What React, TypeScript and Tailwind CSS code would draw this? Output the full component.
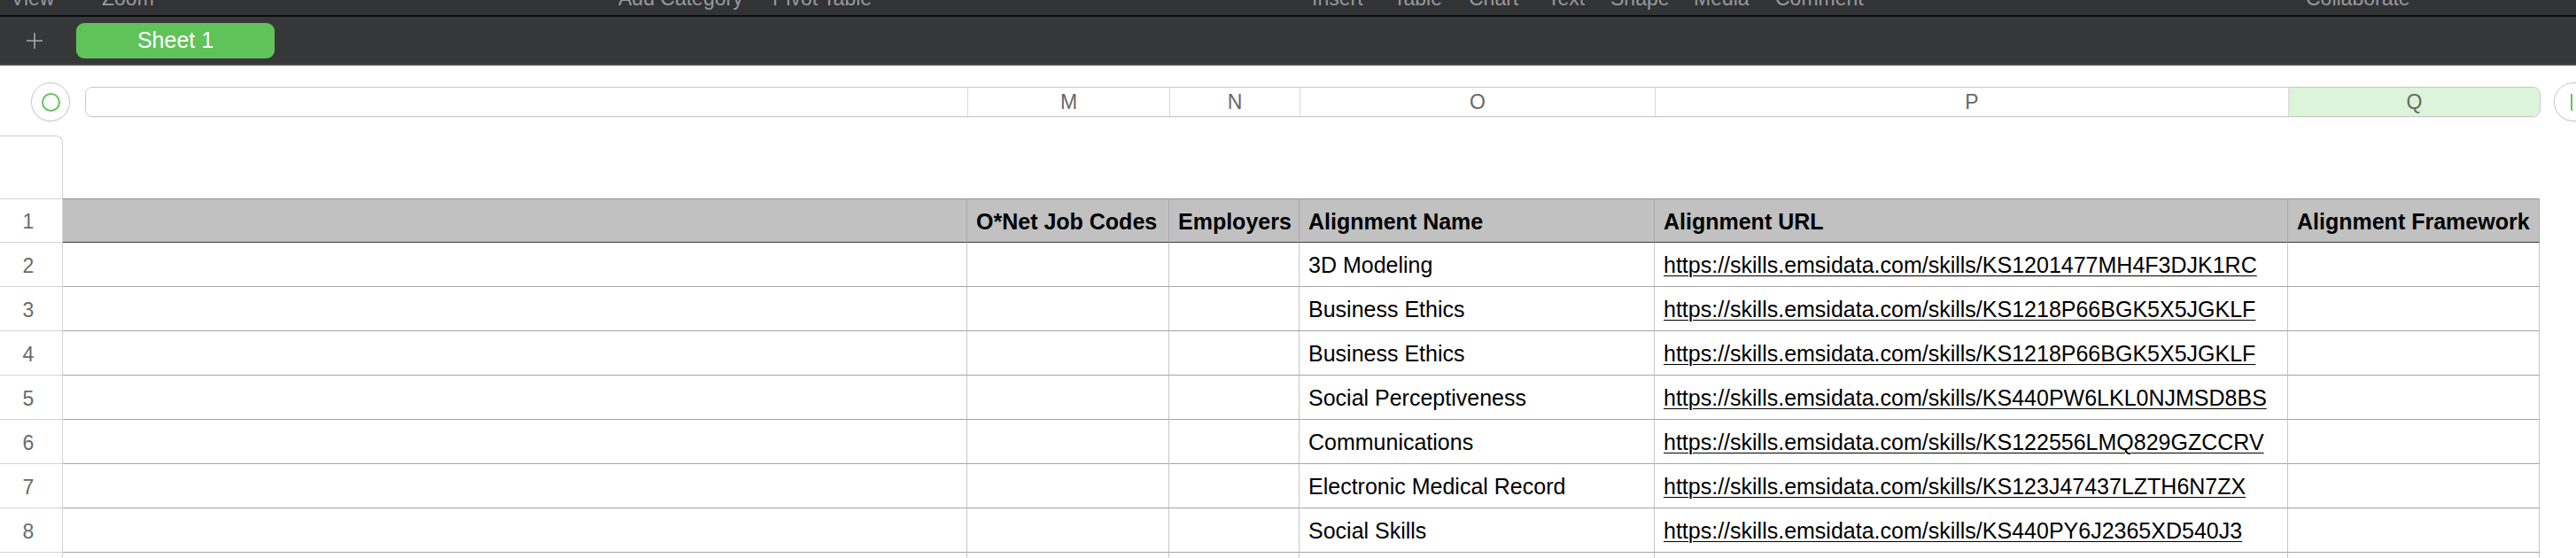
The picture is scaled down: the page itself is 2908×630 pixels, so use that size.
import React from 'react';

const MENU = [
  { label: 'View', w: 'w-[103px]' },
  { label: 'Zoom', w: 'w-[583px]' },
  { label: 'Add Category', w: 'w-[174px]' },
  { label: 'Pivot Table', w: 'w-[609px]' },
  { label: 'Insert', w: 'w-[92px]' },
  { label: 'Table', w: 'w-[85px]' },
  { label: 'Chart', w: 'w-[89px]' },
  { label: 'Text', w: 'w-[71px]' },
  { label: 'Shape', w: 'w-[94px]' },
  { label: 'Media', w: 'w-[92px]' },
  { label: 'Comment', w: 'w-[599px]' },
  { label: 'Collaborate', w: 'w-[200px]' },
];

const BAR = [
  { letter: '', w: 'w-[995px]', bg: 'bg-white' },
  { letter: 'M', w: 'w-[228px]', bg: 'bg-white' },
  { letter: 'N', w: 'w-[147px]', bg: 'bg-white' },
  { letter: 'O', w: 'w-[401px]', bg: 'bg-white' },
  { letter: 'P', w: 'w-[715px]', bg: 'bg-white' },
  { letter: 'Q', w: 'w-[284px]', bg: 'bg-[#dbf4da]' },
];

const COLS = ['w-[1021px]', 'w-[228px]', 'w-[147px]', 'w-[401px]', 'w-[715px]', 'w-[284px]'];
const HEADERS = ['', 'O*Net Job Codes', 'Employers', 'Alignment Name', 'Alignment URL', 'Alignment Framework'];

const ROWS: [string, string][] = [
  ['3D Modeling', 'KS1201477MH4F3DJK1RC'],
  ['Business Ethics', 'KS1218P66BGK5X5JGKLF'],
  ['Business Ethics', 'KS1218P66BGK5X5JGKLF'],
  ['Social Perceptiveness', 'KS440PW6LKL0NJMSD8BS'],
  ['Communications', 'KS122556LMQ829GZCCRV'],
  ['Electronic Medical Record', 'KS123J47437LZTH6N7ZX'],
  ['Social Skills', 'KS440PY6J2365XD540J3'],
];

const RowNumber = ({ n, top }: { n?: number; top?: boolean }) => (
  <div
    className={`w-[71px] shrink-0 flex items-center justify-center pr-[6px] pt-[3px] border-r border-b border-[#d4d4d4] text-[23px] text-[#6a6a6a] ${
      top ? 'border-t' : ''
    }`}
  >
    {n}
  </div>
);

const Handle = ({ bar }: { bar?: boolean }) => (
  <div
    className={`w-[44px] h-[44px] shrink-0 rounded-full border-[1.5px] border-[#c9c9c9] bg-white shadow-[0_1px_2px_rgba(0,0,0,0.08)] flex items-center ${
      bar ? 'justify-start pl-[18px]' : 'justify-center'
    }`}
  >
    {bar ? (
      <div className="w-[2px] h-[19px] bg-[#5fc35a]" />
    ) : (
      <div className="w-[21px] h-[21px] rounded-full border-2 border-[#62c45b]" />
    )}
  </div>
);

export default function App() {
  return (
    <div className="w-[2908px] h-[630px] overflow-hidden bg-white font-['Liberation_Sans',Arial,sans-serif]">
      {/* toolbar (labels cut at the top) */}
      <div className="h-[19px] bg-[#323335] border-b-2 border-[#0d0d0e] overflow-hidden flex pl-[12px]">
        {MENU.map((m) => (
          <div key={m.label} className={`${m.w} shrink-0`}>
            <span className="block mt-[-13px] text-[23px] leading-[23px] text-[#98989b] whitespace-nowrap">{m.label}</span>
          </div>
        ))}
      </div>

      {/* sheet tabs */}
      <div className="h-[55px] bg-[#363739] border-b-2 border-[#4a4b4d] flex items-center pl-[29px]">
        <svg width="20" height="20" viewBox="0 0 20 20" className="shrink-0">
          <path d="M10 1v18M1 10h18" stroke="#a9a9ab" strokeWidth="1.6" />
        </svg>
        <div className="ml-[37px] w-[224px] h-[40px] rounded-[9px] bg-[#5fc35a] flex items-center justify-center text-white text-[25px]">
          Sheet 1
        </div>
      </div>

      {/* column header bar */}
      <div className="mt-[19px] flex items-center">
        <div className="ml-[35px]">
          <Handle />
        </div>
        <div className="ml-[17px] h-[34px] flex shrink-0 rounded-[8px] border border-[#c8c8c8] overflow-hidden shadow-[0_1px_1px_rgba(0,0,0,0.06)]">
          {BAR.map((b, i) => (
            <div
              key={i}
              className={`${b.w} ${b.bg} shrink-0 flex items-center justify-center text-[23px] text-[#676767] ${
                i > 0 ? 'border-l border-[#d9d9d9]' : ''
              }`}
            >
              {b.letter}
            </div>
          ))}
        </div>
        <div className="ml-[15px]">
          <Handle bar />
        </div>
      </div>

      {/* table */}
      <div className="mt-[16px]">
        <div className="w-[71px] h-[71px] border-t border-r border-[#cfcfcf] rounded-tr-[8px]" />
        <div className="flex h-[50px]">
          <RowNumber n={1} top />
          {HEADERS.map((h, i) => (
            <div
              key={i}
              className={`${COLS[i]} shrink-0 bg-[#c0c1c0] border-t border-[#979797] border-b border-b-[#3a3a3a] border-r border-r-[#a9a9a9] px-[10px] pt-[3px] flex items-center font-bold text-[25px] text-black whitespace-nowrap overflow-hidden`}
            >
              {h}
            </div>
          ))}
        </div>
        {[...ROWS, ['', ''] as [string, string]].map(([name, code], r) => (
          <div key={r} className="flex h-[50px]">
            <RowNumber n={r + 2} />
            {COLS.map((w, i) => (
              <div
                key={i}
                className={`${w} shrink-0 border-b border-[#a3a3a3] border-r border-r-[#c6c6c6] px-[10px] pt-[3px] flex items-center text-[25px] text-black whitespace-nowrap overflow-hidden`}
              >
                {i === 3 && name}
                {i === 4 && code && (
                  <span className="underline underline-offset-[3px] decoration-1">
                    https://skills.emsidata.com/skills/{code}
                  </span>
                )}
              </div>
            ))}
          </div>
        ))}
      </div>
    </div>
  );
}
